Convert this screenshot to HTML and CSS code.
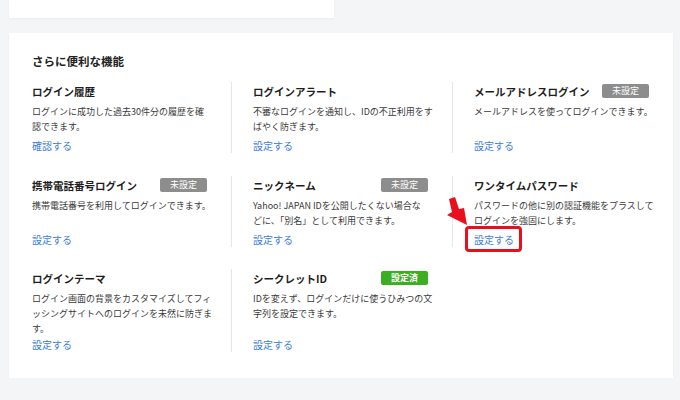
FILE: index.html
```html
<!DOCTYPE html>
<html lang="ja">
<head>
<meta charset="utf-8">
<link rel="stylesheet" href="styles.css">
</head>
<body>
<div class="page">
  <div class="top-card"></div>
  <section class="card">
    <h2 class="heading">さらに便利な機能</h2>
    <div class="grid">
      <div class="item">
        <div class="title-row"><span class="title">ログイン履歴</span></div>
        <p class="desc">ログインに成功した過去30件分の履歴を確<br>認できます。</p>
        <a class="link">確認する</a>
      </div>
      <div class="item">
        <div class="title-row"><span class="title">ログインアラート</span></div>
        <p class="desc">不審なログインを通知し、IDの不正利用をす<br>ばやく防ぎます。</p>
        <a class="link">設定する</a>
      </div>
      <div class="item">
        <div class="title-row"><span class="title">メールアドレスログイン</span><span class="badge">未設定</span></div>
        <p class="desc">メールアドレスを使ってログインできます。</p>
        <a class="link">設定する</a>
      </div>
      <div class="item">
        <div class="title-row"><span class="title">携帯電話番号ログイン</span><span class="badge">未設定</span></div>
        <p class="desc">携帯電話番号を利用してログインできます。</p>
        <a class="link">設定する</a>
      </div>
      <div class="item">
        <div class="title-row"><span class="title">ニックネーム</span><span class="badge">未設定</span></div>
        <p class="desc">Yahoo! JAPAN IDを公開したくない場合な<br>どに、「別名」として利用できます。</p>
        <a class="link">設定する</a>
      </div>
      <div class="item">
        <div class="title-row"><span class="title">ワンタイムパスワード</span></div>
        <p class="desc">パスワードの他に別の認証機能をプラスして<br>ログインを強固にします。</p>
        <a class="link highlight">設定する<span class="frame"></span><svg class="arrow" width="28" height="32" viewBox="0 0 28 32"><polygon points="6,4 12,2 16,14 21,13 24,30 4,20 9,17" fill="#e8101c"/></svg></a>
      </div>
      <div class="item row3">
        <div class="title-row"><span class="title">ログインテーマ</span></div>
        <p class="desc">ログイン画面の背景をカスタマイズしてフィ<br>ッシングサイトへのログインを未然に防ぎま<br>す。</p>
        <a class="link">設定する</a>
      </div>
      <div class="item row3">
        <div class="title-row"><span class="title">シークレットID</span><span class="badge done">設定済</span></div>
        <p class="desc">IDを変えず、ログインだけに使うひみつの文<br>字列を設定できます。</p>
        <a class="link">設定する</a>
      </div>
    </div>
  </section>
</div>
</body>
</html>
```

FILE: styles.css
```css
html, body {
  margin: 0;
  padding: 0;
  background: #f4f5f7;
}
body {
  font-family: "Noto Sans CJK JP", "Noto Sans", sans-serif;
  color: #222;
}
.page {
  padding: 0 7px 0 9px;
  display: flex;
  flex-direction: column;
  gap: 15px;
}
.top-card {
  width: 325px;
  height: 18px;
  background: #fff;
  box-shadow: 0 1px 2px rgba(0, 0, 0, 0.04);
}
.card {
  background: #fff;
  box-shadow: 0 1px 2px rgba(0, 0, 0, 0.04);
  padding: 19px 24px 22px 23px;
  height: 345px;
  box-sizing: border-box;
}
.heading {
  margin: 0 0 12px;
  font-size: 11.5px;
  line-height: 18px;
  font-weight: 700;
  color: #222;
}
.grid {
  display: grid;
  grid-template-columns: 199px 221px 1fr;
  row-gap: 23px;
}
.item {
  display: flex;
  flex-direction: column;
  padding: 0 24px 0 21px;
  border-left: 1px solid #e6e6e6;
}
.item:nth-child(3n+1) {
  padding-left: 0;
  border-left: none;
}
.item:nth-child(3n) {
  padding-right: 0;
}
.item.row3 {
  margin-top: -1px;
}
.title-row {
  display: flex;
  align-items: center;
  justify-content: space-between;
  height: 18px;
}
.title {
  font-size: 10.5px;
  font-weight: 700;
  color: #1e1e1e;
  white-space: nowrap;
}
.badge {
  width: 47px;
  height: 14px;
  line-height: 14px;
  border-radius: 2px;
  background: #8d8d8d;
  color: #fff;
  font-size: 9px;
  text-align: center;
}
.badge.done {
  background: #3cae22;
  font-weight: 700;
}
.desc {
  margin: 4px -12px 0 0;
  font-size: 9px;
  line-height: 15px;
  color: #3a3a3a;
  white-space: nowrap;
}
.link {
  margin-top: auto;
  padding-top: 4px;
  font-size: 10px;
  line-height: 15px;
  color: #3b7ddc;
  align-self: flex-start;
}
.row3 .link {
  padding-top: 1px;
}
.highlight {
  position: relative;
}
.frame {
  position: absolute;
  left: -9px;
  top: -2px;
  width: 51px;
  height: 20px;
  border: 3px solid #e8101c;
  border-radius: 4px;
}
.arrow {
  position: absolute;
  left: -31px;
  top: -33px;
}
```
